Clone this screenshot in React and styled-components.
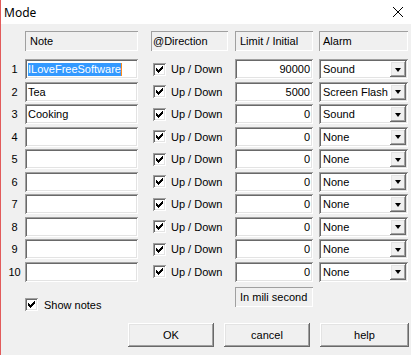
import React from "react"
import styled, { createGlobalStyle } from "styled-components"

const GlobalStyle = createGlobalStyle`
  html, body {
    margin: 0;
    padding: 0;
    background: #f0f0f0;
  }
  body {
    font-family: "Liberation Sans", Arial, sans-serif;
    font-size: 11px;
    color: #000;
  }
`

const sunken = `
  box-shadow: inset 1px 1px #a0a0a0, inset -1px -1px #ffffff,
    inset 2px 2px #696969, inset -2px -2px #e3e3e3;
`

const raised = `
  box-shadow: inset -1px -1px #696969, inset 1px 1px #ffffff,
    inset -2px -2px #a0a0a0, inset 2px 2px #e3e3e3;
`

const Window = styled.div`
  width: 410px;
  height: 355px;
  border-left: 1px solid #e25b5b;
  background: #f0f0f0;
  overflow: hidden;
  display: flex;
  flex-direction: column;
`

const TitleBar = styled.div`
  height: 24px;
  flex: none;
  background: #ffffff;
  display: flex;
  align-items: center;
  justify-content: space-between;
  padding: 0 7px 0 3px;
  font-family: "Noto Sans", "Open Sans", sans-serif;
  font-size: 12px;
`

const Body = styled.div`
  padding: 7px 0 0 0;
`

const Table = styled.div`
  display: grid;
  grid-template-columns: 24px 126px 84px 84px 89px;
  grid-template-rows: 28px;
  grid-auto-rows: 22.5px;
`

const HeaderCell = styled.div`
  grid-column: ${(p) => p.$col};
  align-self: start;
  width: ${(p) => p.$w}px;
  height: 20px;
  box-sizing: border-box;
  padding-left: ${(p) => p.$pad}px;
  display: flex;
  align-items: center;
  box-shadow: inset 1px 1px #a0a0a0, inset -1px -1px #ffffff;
`

const RowNumber = styled.div`
  grid-column: 1;
  height: 20px;
  display: flex;
  align-items: center;
  justify-content: center;
  padding-left: 3px;
`

const Edit = styled.div`
  width: ${(p) => p.$w}px;
  height: 20px;
  box-sizing: border-box;
  padding: 0 ${(p) => (p.$right ? 3 : 2)}px 0 3px;
  background: #ffffff;
  display: flex;
  align-items: center;
  justify-content: ${(p) => (p.$right ? "flex-end" : "flex-start")};
  white-space: nowrap;
  ${sunken}
`

const Selected = styled.span`
  background: #3399ff;
  color: #ffffff;
  line-height: 13px;
  border-right: 1px solid #ff8c1a;
`

const CheckLine = styled.label`
  height: 20px;
  display: flex;
  align-items: center;
  gap: 5px;
  padding-left: 2px;
`

const Box = styled.span`
  width: 13px;
  height: 13px;
  flex: none;
  box-sizing: border-box;
  background: #ffffff;
  display: flex;
  align-items: center;
  justify-content: center;
  ${sunken}
`

const Combo = styled.div`
  width: 89px;
  height: 20px;
  box-sizing: border-box;
  padding: 2px 2px 2px 4px;
  background: #ffffff;
  display: flex;
  align-items: center;
  ${sunken}
`

const ComboText = styled.span`
  flex: 1;
`

const DropButton = styled.span`
  width: 16px;
  height: 16px;
  flex: none;
  background: #f0f0f0;
  display: flex;
  align-items: center;
  justify-content: center;
  ${raised}
`

const Arrow = styled.span`
  width: 0;
  height: 0;
  border-left: 3.5px solid transparent;
  border-right: 3.5px solid transparent;
  border-top: 4px solid #000;
  margin-top: 1px;
`

const Footer = styled.div`
  display: grid;
  grid-template-columns: 24px 126px 84px 84px 89px;
`

const ShowNotes = styled(CheckLine)`
  grid-column: 2 / 4;
  height: 13px;
  margin-top: 14px;
  padding-left: 0;
  gap: 6px;
`

const Note = styled.div`
  grid-column: 4;
  width: 78px;
  height: 20px;
  margin-top: 3px;
  box-sizing: border-box;
  padding-left: 5px;
  display: flex;
  align-items: center;
  box-shadow: inset 1px 1px #a0a0a0, inset -1px -1px #ffffff;
`

const ButtonRow = styled.div`
  display: flex;
  justify-content: flex-end;
  gap: 10px;
  padding-right: 2px;
  margin-top: 12px;
`

const Button = styled.button`
  width: ${(p) => p.$w}px;
  height: 24px;
  border: none;
  background: #f0f0f0;
  font-family: "Liberation Sans", Arial, sans-serif;
  font-size: 11px;
  color: #000;
  padding: 0;
  ${raised}
`

const Check = () => (
  <Box>
    <svg width="7" height="7" viewBox="0 0 7 7" shapeRendering="crispEdges">
      <path
        d="M6 0h1v3H6v1H5v1H4v1H3v1H2V6H1V5H0V2h1v1h1v1h1V3h1V2h1V1h1z"
        fill="#000"
      />
    </svg>
  </Box>
)

const CloseIcon = () => (
  <svg width="12" height="12" viewBox="0 0 12 12">
    <path d="M1 1L11 11M11 1L1 11" stroke="#000" strokeWidth="1" fill="none" />
  </svg>
)

const rows = [
  { note: "ILoveFreeSoftware", limit: 90000, alarm: "Sound", selected: true },
  { note: "Tea", limit: 5000, alarm: "Screen Flash" },
  { note: "Cooking", limit: 0, alarm: "Sound" },
  { note: "", limit: 0, alarm: "None" },
  { note: "", limit: 0, alarm: "None" },
  { note: "", limit: 0, alarm: "None" },
  { note: "", limit: 0, alarm: "None" },
  { note: "", limit: 0, alarm: "None" },
  { note: "", limit: 0, alarm: "None" },
  { note: "", limit: 0, alarm: "None" },
]

const App = () => {
  return (
    <Window>
      <GlobalStyle />
      <TitleBar>
        <span>Mode</span>
        <CloseIcon />
      </TitleBar>
      <Body>
        <Table>
          <HeaderCell $col={2} $w={113} $pad={5}>Note</HeaderCell>
          <HeaderCell $col={3} $w={77} $pad={2}>@Direction</HeaderCell>
          <HeaderCell $col={4} $w={78} $pad={5}>Limit / Initial</HeaderCell>
          <HeaderCell $col={5} $w={89} $pad={4}>Alarm</HeaderCell>
          {rows.map((r, i) => (
            <React.Fragment key={i}>
              <RowNumber>{i + 1}</RowNumber>
              <Edit $w={113}>
                {r.selected ? <Selected>{r.note}</Selected> : r.note}
              </Edit>
              <CheckLine>
                <Check />
                Up / Down
              </CheckLine>
              <Edit $w={78} $right>
                {r.limit}
              </Edit>
              <Combo>
                <ComboText>{r.alarm}</ComboText>
                <DropButton>
                  <Arrow />
                </DropButton>
              </Combo>
            </React.Fragment>
          ))}
        </Table>
        <Footer>
          <ShowNotes>
            <Check />
            Show notes
          </ShowNotes>
          <Note>In mili second</Note>
        </Footer>
        <ButtonRow>
          <Button $w={86}>OK</Button>
          <Button $w={86}>cancel</Button>
          <Button $w={89}>help</Button>
        </ButtonRow>
      </Body>
    </Window>
  )
}

export default App
